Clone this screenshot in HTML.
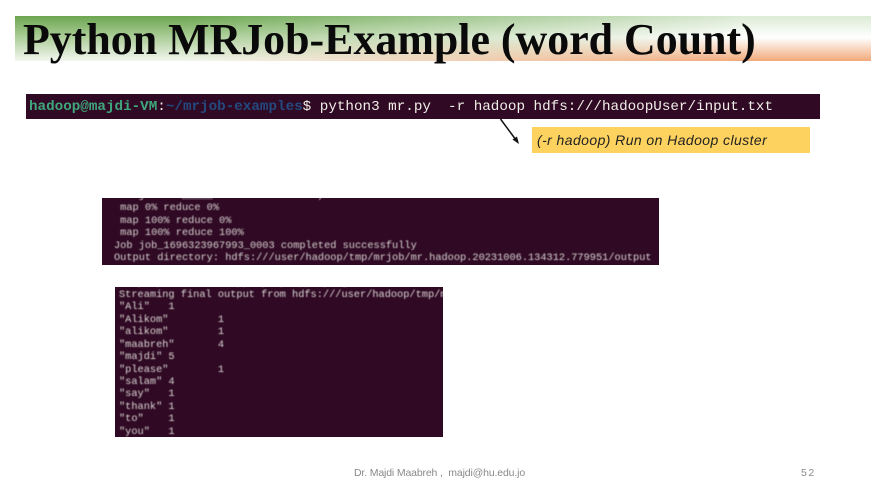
<!DOCTYPE html>
<html>
<head>
<meta charset="utf-8">
<style>
html,body{margin:0;padding:0;background:#fff;}
#s{position:relative;width:880px;height:495px;overflow:hidden;background:#fff;}
.band{position:absolute;left:15px;top:16px;width:856px;height:45px;
background:linear-gradient(#dcebd5 0%,#fff 48%,#f2a97a 100%);}
.band:before{content:"";position:absolute;inset:0;
background:linear-gradient(#6ba650 0%,#a9cc95 45%,#f3f7ef 100%);
-webkit-mask-image:linear-gradient(90deg,#000 0%,#000 20%,rgba(0,0,0,0) 85%);
mask-image:linear-gradient(90deg,#000 0%,#000 20%,rgba(0,0,0,0) 85%);}
.title{position:absolute;left:23px;top:14px;font:bold 43.9px/52px "Liberation Serif",serif;color:#0a0a0a;white-space:pre;filter:blur(.3px);}
.term{position:absolute;background:#300a24;overflow:hidden;font-family:"Liberation Mono",monospace;white-space:pre;}
.t1{left:26px;top:94px;width:794px;height:25px;color:#f0eee8;font-size:14.25px;line-height:25px;}
.t1 span{position:absolute;left:3px;top:1px;filter:blur(.35px);}
.g{color:#3fa77c;font-weight:bold;}
.b{color:#23497f;font-weight:bold;}
.t2{left:102px;top:198px;width:557px;height:67px;color:#d8d4d2;font-size:10.3px;line-height:12.5px;}
.t2 div{position:absolute;left:12px;top:-8.500px;filter:blur(.4px);}
.t3{left:115px;top:287px;width:328px;height:150px;color:#dcd8d6;font-size:10.3px;line-height:12.42px;}
.t3 div{position:absolute;left:4px;top:-10.400px;filter:blur(.4px);}
.note{position:absolute;left:532px;top:127px;width:278px;height:26px;background:#fdd25f;color:#222;font:italic 14px/26px "Liberation Sans",sans-serif;letter-spacing:.42px;}
.note span{position:absolute;left:5px;top:0;white-space:pre;}
.foot{position:absolute;top:466px;font:10.5px/14px "Liberation Sans",sans-serif;color:#8a8a8a;white-space:pre;}
svg{position:absolute;left:0;top:0;}
</style>
</head>
<body>
<div id="s">
<div class="band"></div>
<div class="title">Python MRJob-Example (word Count)</div>

<div class="term t1"><span><b class="g">hadoop@majdi-VM</b>:<b class="b">~/mrjob-examples</b>$ python3 mr.py  -r hadoop hdfs:///hadoopUser/input.txt</span></div>

<svg width="880" height="495" viewBox="0 0 880 495">
<line x1="500.500" y1="119" x2="516" y2="140" stroke="#111" stroke-width="1.500"/>
<path d="M519 144 L512.500 139.500 L517 136.500 Z" fill="#111"/>
</svg>

<div class="note"><span>(-r hadoop) Run on Hadoop cluster</span></div>

<div class="term t2"><div>    j      _____                 ,
 map 0% reduce 0%
 map 100% reduce 0%
 map 100% reduce 100%
Job job_1696323967993_0003 completed successfully
Output directory: hdfs:///user/hadoop/tmp/mrjob/mr.hadoop.20231006.134312.779951/output</div></div>

<div class="term t3"><div>   y  p            pp  y  p  pp  y  g
Streaming final output from hdfs:///user/hadoop/tmp/mrjob
"Ali"   1
"Alikom"        1
"alikom"        1
"maabreh"       4
"majdi" 5
"please"        1
"salam" 4
"say"   1
"thank" 1
"to"    1
"you"   1</div></div>

<div class="foot" style="left:354px;letter-spacing:-.15px;">Dr. Majdi Maabreh ,  majdi@hu.edu.jo</div>
<div class="foot" style="left:801px;letter-spacing:1.5px;">52</div>
</div>
</body>
</html>
